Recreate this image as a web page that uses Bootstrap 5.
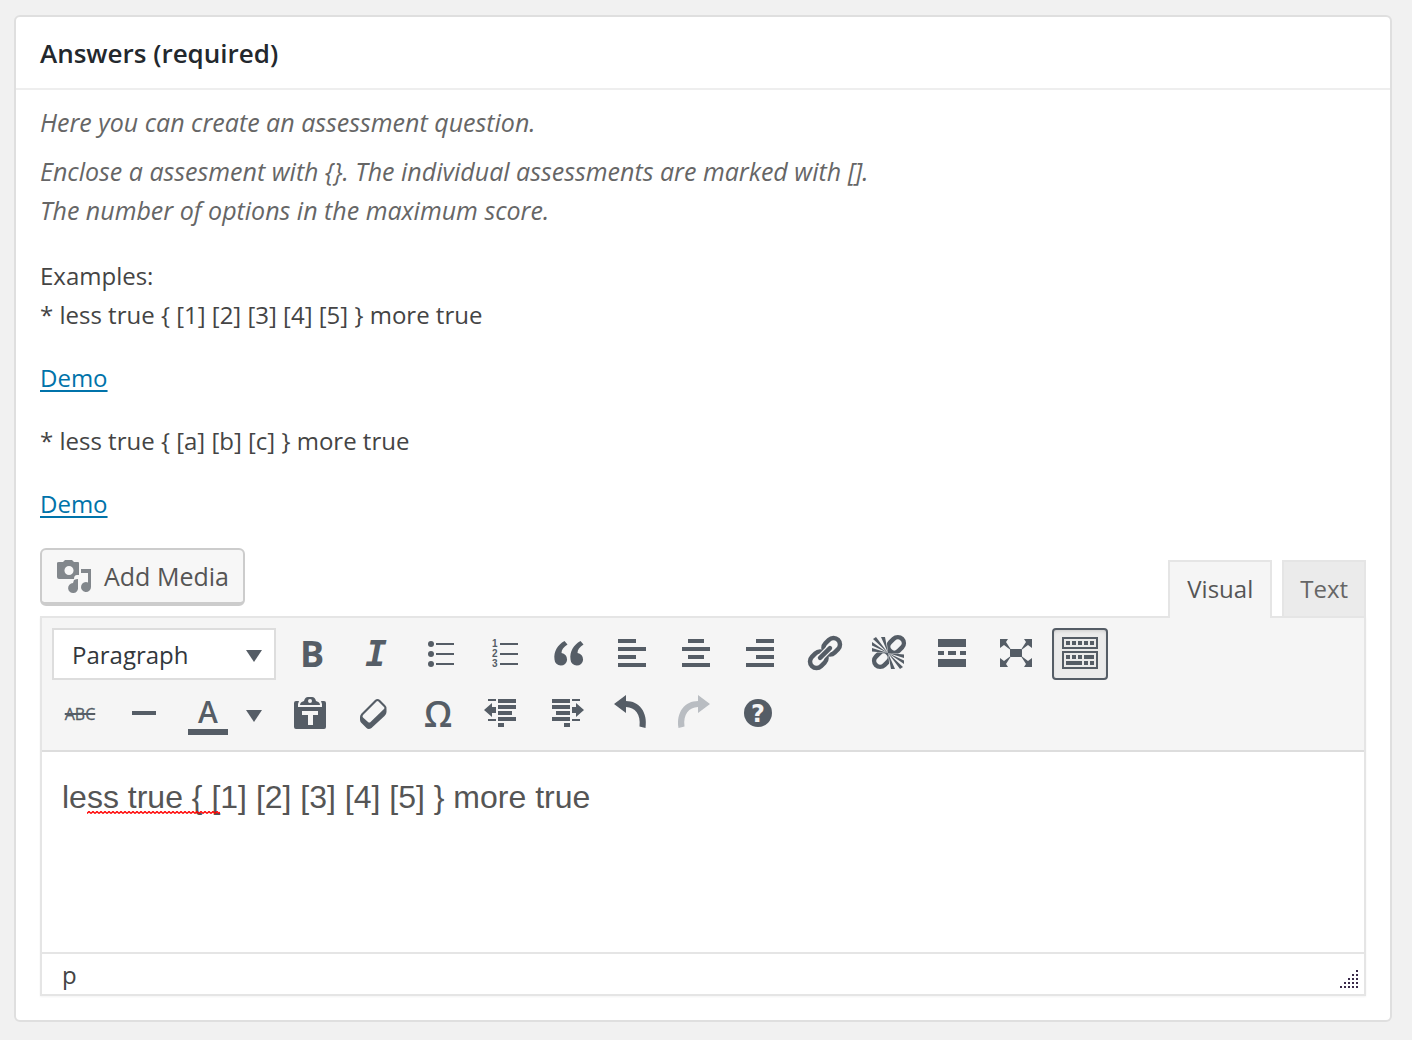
<!DOCTYPE html>
<html lang="en">
<head>
<meta charset="utf-8">
<meta name="viewport" content="width=device-width, initial-scale=1">
<title>Answers (required)</title>
<link href="https://cdn.jsdelivr.net/npm/bootstrap@5.3.0/dist/css/bootstrap.min.css" rel="stylesheet">
<style>
  body { background: #f1f1f1; color: #444; font-family: "Open Sans", "Noto Sans", sans-serif; font-size: 24px; line-height: 39px; }
  .postbox { margin: 15px 20px 18px 14px; border: 2px solid #dfdfdf; border-radius: 6px; }
  .postbox-head { border-bottom: 2px solid #eee; padding: 17px 24px 15px; }
  .postbox-head h2 { font-size: 26px; line-height: 39px; font-weight: 600; color: #23282d; }
  .postbox-body { padding: 13px 24px 24px; }
  .hint { color: #666; font-size: 25px; font-style: italic; margin-bottom: 10px; }
  .example { margin-bottom: 24px; }
  .postbox-body a { color: #0073aa; text-decoration-thickness: 2px; text-underline-offset: 3px; }
  .media-row { padding-top: 1px; }
  .media-btn { height: 58px; padding: 0 14px; gap: 12px; font-size: 25px; color: #555; background: #f7f7f7; border: 2px solid #ccc; border-bottom-width: 4px; border-radius: 6px; }
  .tabs-row { margin-top: 12px; gap: 10px; }
  .tab-btn { height: 56px; padding: 0 16px 2px; border: 2px solid #e5e5e5; border-bottom: 0; background: #ebebeb; color: #666; }
  .tab-btn.active { height: 58px; margin-bottom: -2px; padding: 0 17px 4px; position: relative; background: #f5f5f5; color: #555; }
  .editor { border: 2px solid #e5e5e5; box-shadow: 0 1px 2px rgba(0,0,0,.05); }
  .tools { background: #f5f5f5; border-bottom: 2px solid #ddd; padding: 10px; }
  .tool { width: 56px; height: 52px; padding: 0; border: 2px solid transparent; border-radius: 4px; background: none; color: #555d66; line-height: 40px; }
  .tool svg, .media-btn svg { display: block; fill: currentColor; }
  .tool.pressed { border-color: #555d66; background: #ebebeb; box-shadow: inset 0 2px 5px -3px rgba(0,0,0,.3); }
  .tool.narrow { width: 38px; padding-right: 2px; }
  .tool:disabled { color: #b9bdc2; }
  .t-bold { font-size: 36px; font-weight: 700; }
  .t-italic { font-family: "DejaVu Sans Mono", monospace; font-size: 36px; font-weight: 700; font-style: italic; }
  .t-strike { font-size: 16px; font-weight: 500; -webkit-text-stroke: 0.3px; text-decoration: line-through; text-decoration-thickness: 2px; }
  .t-color span { display: block; width: 40px; height: 42px; line-height: 38px; border-bottom: 6px solid; font-size: 30px; font-weight: 600; }
  .t-omega { font-size: 36px; font-weight: 600; }
  .format { width: 224px; }
  .format select { height: 52px; padding: 0 18px; border: 2px solid #ddd; background: #fff; color: #32373c; appearance: none; }
  .format svg { right: 14px; top: 22px; fill: #555d66; pointer-events: none; }
  .content textarea { display: block; height: 200px; padding: 23px 20px; border: 0; resize: none; outline: 0; color: #555; font: 32px/45px "Liberation Sans", Arial, sans-serif; }
  .squiggle { left: 45px; top: 59px; }
  .status { border-top: 2px solid #e5e5e5; height: 42px; padding: 0 4px 0 20px; }
  .status svg { margin-bottom: 4px; }
</style>
<script src="https://cdn.jsdelivr.net/npm/bootstrap@5.3.0/dist/js/bootstrap.bundle.min.js"></script>
</head>
<body>
<main class="postbox bg-white">
  <header class="postbox-head"><h2 class="m-0">Answers (required)</h2></header>
  <div class="postbox-body">
    <p class="hint">Here you can create an assessment question.</p>
    <p class="hint">Enclose a assesment with {}. The individual assessments are marked with [].<br>The number of options in the maximum score.</p>
    <p class="example pt-3">Examples:<br>* less true { [1] [2] [3] [4] [5] } more true</p>
    <p class="example"><a href="#">Demo</a></p>
    <p class="example">* less true { [a] [b] [c] } more true</p>
    <p class="example"><a href="#">Demo</a></p>

    <div class="media-row d-flex justify-content-between align-items-start">
      <button type="button" class="media-btn d-flex align-items-center">
        <svg width="36" height="36" viewBox="0 0 36 36" aria-hidden="true"><path fill="#82878c" fill-rule="evenodd" d="M3 4h4l2-2h7l2 2h4q1 0 1 1v12h-2q-3 0-3 4H3q-2 0-2-2V5q0-1 2-1zM13 8a4.500 4.500 0 1 0 0 9.100 4.500 4.500 0 0 0 0-9.100zM25 11h10v18a5 5 0 1 1-3-4.500V15h-7zM22 21v8a5 5 0 1 1-5-4l1-3q2-1 4-1z"/></svg>
        <span>Add Media</span>
      </button>
      <div class="tabs-row d-flex align-items-end" role="tablist">
        <button type="button" role="tab" class="tab-btn active">Visual</button>
        <button type="button" role="tab" class="tab-btn">Text</button>
      </div>
    </div>

    <div class="editor">
      <div class="tools d-flex flex-column gap-2">
        <div class="d-flex flex-wrap gap-2">
          <div class="format position-relative">
            <select class="w-100 rounded-0" aria-label="Format"><option>Paragraph</option><option>Heading 1</option></select>
            <svg class="position-absolute" width="16" height="12" aria-hidden="true"><path d="M0 0h16L8 12z"/></svg>
          </div>
          <button type="button" class="tool t-bold" aria-label="Bold">B</button>
          <button type="button" class="tool t-italic" aria-label="Italic">I</button>
          <button type="button" class="tool d-flex align-items-center justify-content-center" aria-label="Bulleted list"><svg width="40" height="40"><circle cx="11" cy="10" r="3"/><circle cx="11" cy="20" r="3"/><circle cx="11" cy="30" r="3"/><path d="M16 9h18v2H16zM16 19h18v2H16zM16 29h18v2H16z"/></svg></button>
          <button type="button" class="tool d-flex align-items-center justify-content-center" aria-label="Numbered list"><svg width="40" height="40"><g font-family="Liberation Sans" font-weight="700" font-size="10"><text x="8" y="13">1</text><text x="8" y="23">2</text><text x="8" y="33">3</text></g><path d="M16 9h18v2H16zM16 19h18v2H16zM16 29h18v2H16z"/></svg></button>
          <button type="button" class="tool d-flex align-items-center justify-content-center" aria-label="Blockquote"><svg width="40" height="40"><path id="q" d="M16.500 7l3 3.500c-4 2.500-6 5-6 8.500a6.300 6.300 0 1 1-7 6.500c-1-8 3-14.500 10-18.500z"/><use href="#q" x="16"/></svg></button>
          <button type="button" class="tool d-flex align-items-center justify-content-center" aria-label="Align left"><svg width="40" height="40"><path d="M6 5h18v4H6zM6 13h28v4H6zM6 21h18v4H6zM6 29h28v4H6z"/></svg></button>
          <button type="button" class="tool d-flex align-items-center justify-content-center" aria-label="Align center"><svg width="40" height="40"><path d="M12 5h16v4H12zM6 13h28v4H6zM12 21h16v4H12zM6 29h28v4H6z"/></svg></button>
          <button type="button" class="tool d-flex align-items-center justify-content-center" aria-label="Align right"><svg width="40" height="40"><path d="M16 5h18v4H16zM6 13h28v4H6zM16 21h18v4H16zM6 29h28v4H6z"/></svg></button>
          <button type="button" class="tool d-flex align-items-center justify-content-center" aria-label="Insert link"><svg width="40" height="40"><g transform="translate(21 19) rotate(-45)" fill="none" stroke="currentColor" stroke-width="4.500"><rect x="-18.500" y="-6.500" width="18" height="13" rx="6.500"/><rect x=".5" y="-6.500" width="18" height="13" rx="6.500"/><path stroke="#f5f5f5" stroke-width="7" d="M-8 0H8"/><path stroke-linecap="round" d="M-7 0H7"/></g></svg></button>
          <button type="button" class="tool d-flex align-items-center justify-content-center" aria-label="Remove link"><svg width="40" height="40"><g transform="translate(21 18) rotate(-45)" fill="none" stroke="currentColor" stroke-width="4.500"><rect x="-18.500" y="-6" width="17" height="12" rx="6"/><rect x="1.500" y="-6" width="17" height="12" rx="6"/></g><path fill="#f5f5f5" d="M20 19L2 18V1h16zM20 19l2 18h16V20z"/><path id="rays" d="M20 19L4 14v3.500zM20 19L4 8v3.500zM20 19L5 5l3-2zM20 19L13 3h4z"/><use href="#rays" transform="rotate(180 20 19)"/></svg></button>
          <button type="button" class="tool d-flex align-items-center justify-content-center" aria-label="Read more"><svg width="40" height="40"><path d="M6 5h28v8H6zM6 17h6v4H6zM16 17h8v4h-8zM28 17h6v4h-6zM6 25h28v8H6z"/></svg></button>
          <button type="button" class="tool d-flex align-items-center justify-content-center" aria-label="Fullscreen"><svg width="40" height="40"><path d="M14 15h12v8H14zM4 5h8l-2 3 4.500 7-.5.500-6-4.500-4 3zM36 5h-8l2 3-4.500 7 .5.500 6-4.500 4 3zM4 33h8l-2-3 4.500-7-.5-.5-6 4.500-4-3zM36 33h-8l2-3-4.500-7 .5-.5 6 4.500 4-3z"/></svg></button>
          <button type="button" class="tool pressed d-flex align-items-center justify-content-center" aria-label="Toolbar toggle"><svg width="40" height="40"><path fill="none" stroke="currentColor" stroke-width="2" d="M3 4h34v10H3zM3 18h34v16H3z"/><path d="M6 7h4v4H6zM12 7h4v4h-4zM18 7h4v4h-4zM24 7h4v4h-4zM30 7h4v4h-4zM6 21h4v4H6zM12 21h4v4h-4zM18 21h4v4h-4zM24 21h10v4H24zM6 27h16v4H6zM24 27h4v4h-4zM30 27h4v4h-4z"/></svg></button>
        </div>
        <div class="d-flex flex-wrap gap-2">
          <button type="button" class="tool t-strike" aria-label="Strikethrough">ABC</button>
          <button type="button" class="tool d-flex align-items-center justify-content-center" aria-label="Horizontal line"><svg width="40" height="40"><path d="M8 17h24v4H8z"/></svg></button>
          <div class="d-flex">
            <button type="button" class="tool t-color d-flex align-items-center justify-content-center" aria-label="Text color"><span>A</span></button>
            <button type="button" class="tool narrow d-flex align-items-center justify-content-center" aria-label="Choose text color"><svg width="16" height="16"><path d="M0 4h16L8 16z"/></svg></button>
          </div>
          <button type="button" class="tool d-flex align-items-center justify-content-center" aria-label="Paste as text"><svg width="40" height="40"><path fill-rule="evenodd" d="M6 7h3l-1 3v3h24v-3l-1-3h3q2 0 2 2v24q0 2-2 2H6q-2 0-2-2V9q0-2 2-2zM12 17v4h6v10h5V21h5v-4z"/><path fill-rule="evenodd" d="M10 11q0-3 4-4 1-4 4-4h4q3 0 4 4 4 1 4 4zM20 5a2 2 0 1 0 0 4 2 2 0 0 0 0-4z"/></svg></button>
          <button type="button" class="tool d-flex align-items-center justify-content-center" aria-label="Clear formatting"><svg width="40" height="40"><path fill-rule="evenodd" d="M21 6q2.500-2 5 0l5 5q2 2 1.500 4v3q0 2-2 4L17.500 34q-3 2-5 0L7 28.500q-1-1-1-3V23q0-2 1.500-3.500zM24.500 7.500q-1-.8-2 0L9 21q-1 1.500 0 2.500l5 4.500q1.500 1 2.500 0L30 15q1-1 0-2z"/></svg></button>
          <button type="button" class="tool t-omega" aria-label="Special character">Ω</button>
          <button type="button" class="tool d-flex align-items-center justify-content-center" aria-label="Decrease indent"><svg width="40" height="40"><path d="M6 5h8v2H6zM16 5h18v4H16zM16 11h18v4H16zM16 17h14v4H16zM16 23h18v4H16zM16 29h6v4h-6zM6 25h8v2H6zM2 16l8-7v4h4v6h-4v4z"/></svg></button>
          <button type="button" class="tool d-flex align-items-center justify-content-center" aria-label="Increase indent"><svg width="40" height="40"><path d="M26 5h8v2h-8zM6 5h18v4H6zM6 11h18v4H6zM10 17h14v4H10zM6 23h18v4H6zM18 29h6v4h-6zM26 25h8v2h-8zM38 16l-8-7v4h-4v6h4v4z"/></svg></button>
          <button type="button" class="tool d-flex align-items-center justify-content-center" aria-label="Undo"><svg width="40" height="40"><path d="M4 10L16 1v6c13 0 22 11 19.500 27l-6-1.500C31 20 25 13.500 16 13v6z"/></svg></button>
          <button type="button" class="tool d-flex align-items-center justify-content-center" aria-label="Redo" disabled><svg width="40" height="40"><path d="M36 10L24 1v6C11 7 2 18 4.500 34l6-1.500C9 20 15 13.500 24 13v6z"/></svg></button>
          <button type="button" class="tool d-flex align-items-center justify-content-center" aria-label="Help"><svg width="40" height="40"><circle cx="20" cy="19" r="14"/><text x="20" y="28" text-anchor="middle" font-family="DejaVu Sans" font-weight="700" font-size="24" fill="#f5f5f5">?</text></svg></button>
        </div>
      </div>
      <div class="content position-relative">
        <textarea class="w-100" aria-label="Answers" spellcheck="false">less true { [1] [2] [3] [4] [5] } more true</textarea>
        <svg class="squiggle position-absolute" width="133" height="3" aria-hidden="true"><defs><pattern id="wave" width="4" height="3" patternUnits="userSpaceOnUse"><path d="M0 2.500L2 .5l2 2" fill="none" stroke="red" stroke-width="1.400"/></pattern></defs><rect width="133" height="3" fill="url(#wave)"/></svg>
      </div>
      <div class="status d-flex justify-content-between align-items-end">
        <span>p</span>
        <svg width="20" height="20" aria-hidden="true"><path fill="#3a2a4a" d="M16 0h2v2h-2zM12 4h2v2h-2zM16 4h2v2h-2zM8 8h2v2H8zM12 8h2v2h-2zM16 8h2v2h-2zM4 12h2v2H4zM8 12h2v2H8zM12 12h2v2h-2zM16 12h2v2h-2zM0 16h2v2H0zM4 16h2v2H4zM8 16h2v2H8zM12 16h2v2h-2zM16 16h2v2h-2z"/></svg>
      </div>
    </div>
  </div>
</main>
</body>
</html>
